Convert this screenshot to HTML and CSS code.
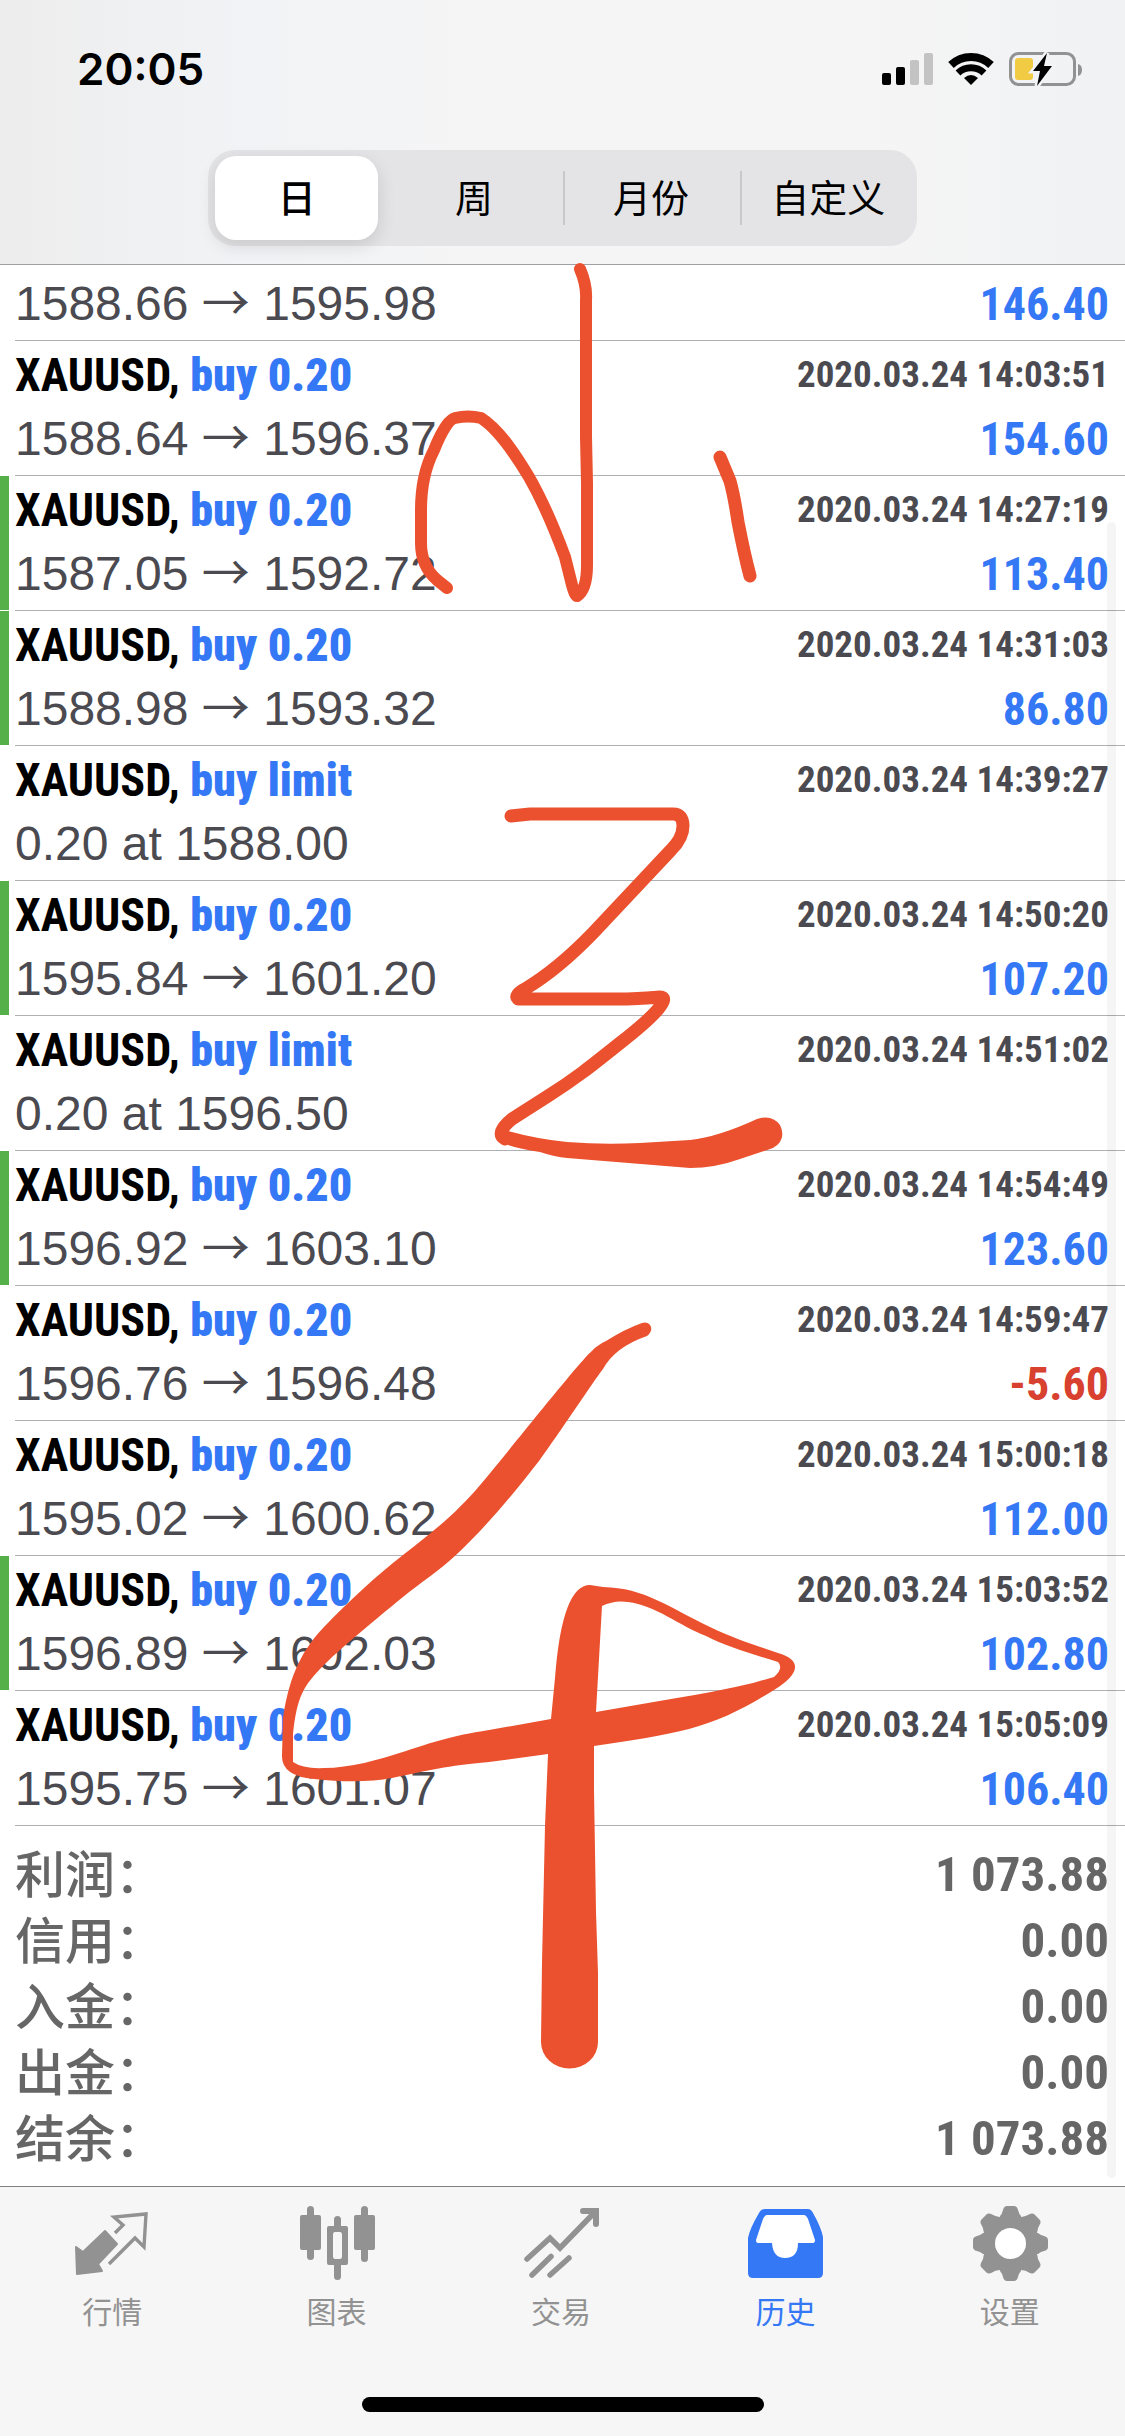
FILE: index.html
```
<!DOCTYPE html>
<html lang="zh-CN">
<head>
  <meta charset="UTF-8">
  <meta name="viewport" content="width=device-width, initial-scale=1.0">
  <title>历史</title>
  <link rel="stylesheet" href="styles.css">
</head>
<body>
  <header class="top">
    <div class="status">
      <time class="clock">20:05</time>
      <svg class="status-icons" viewBox="0 0 200 34" aria-hidden="true">
        <!-- signal -->
        <rect x="0" y="21" width="9" height="12" rx="2"/>
        <rect x="14" y="15" width="9" height="18" rx="2"/>
        <rect x="28" y="8" width="9" height="25" rx="2" fill="#c3c3c3"/>
        <rect x="42" y="1" width="9" height="32" rx="2" fill="#c3c3c3"/>
        <!-- wifi -->
        <path d="M69 13A29 29 0 0 1 109 13" fill="none" stroke="#000" stroke-width="8"/>
        <path d="M76 21A19 19 0 0 1 102 21" fill="none" stroke="#000" stroke-width="7"/>
        <path d="M89 33L82 26Q89 20 96 26Z"/>
        <!-- battery -->
        <rect x="128.5" y="1.5" width="64" height="31" rx="8" fill="none" stroke="#929292" stroke-width="3"/>
        <path d="M196 12Q200 13 200 18Q200 23 196 24Z" fill="#929292"/>
        <rect x="133" y="6" width="18" height="22" rx="3" fill="#f2cb45"/>
        <path class="bolt" d="M165 1L151 19H158L155 34L170 14H162Z"/>
      </svg>
    </div>
    <div class="segmented">
      <button type="button" class="segment active">日</button>
      <button type="button" class="segment">周</button>
      <button type="button" class="segment divided">月份</button>
      <button type="button" class="segment divided">自定义</button>
    </div>
  </header>

  <main class="history">
    <ul class="deals">
      <li class="deal">
        <div class="deal-body">
          <div class="line"><span class="symbol">XAUUSD, <b>buy 0.20</b></span></div>
          <div class="line"><span class="prices">1588.66 <i>→</i> 1595.98</span><span class="profit">146.40</span></div>
        </div>
      </li>
      <li class="deal">
        <div class="deal-body">
          <div class="line"><span class="symbol">XAUUSD, <b>buy 0.20</b></span><time>2020.03.24 14:03:51</time></div>
          <div class="line"><span class="prices">1588.64 <i>→</i> 1596.37</span><span class="profit">154.60</span></div>
        </div>
      </li>
      <li class="deal tp">
        <div class="deal-body">
          <div class="line"><span class="symbol">XAUUSD, <b>buy 0.20</b></span><time>2020.03.24 14:27:19</time></div>
          <div class="line"><span class="prices">1587.05 <i>→</i> 1592.72</span><span class="profit">113.40</span></div>
        </div>
      </li>
      <li class="deal tp">
        <div class="deal-body">
          <div class="line"><span class="symbol">XAUUSD, <b>buy 0.20</b></span><time>2020.03.24 14:31:03</time></div>
          <div class="line"><span class="prices">1588.98 <i>→</i> 1593.32</span><span class="profit">86.80</span></div>
        </div>
      </li>
      <li class="deal">
        <div class="deal-body">
          <div class="line"><span class="symbol">XAUUSD, <b>buy limit</b></span><time>2020.03.24 14:39:27</time></div>
          <div class="line"><span class="prices">0.20 at 1588.00</span></div>
        </div>
      </li>
      <li class="deal tp">
        <div class="deal-body">
          <div class="line"><span class="symbol">XAUUSD, <b>buy 0.20</b></span><time>2020.03.24 14:50:20</time></div>
          <div class="line"><span class="prices">1595.84 <i>→</i> 1601.20</span><span class="profit">107.20</span></div>
        </div>
      </li>
      <li class="deal">
        <div class="deal-body">
          <div class="line"><span class="symbol">XAUUSD, <b>buy limit</b></span><time>2020.03.24 14:51:02</time></div>
          <div class="line"><span class="prices">0.20 at 1596.50</span></div>
        </div>
      </li>
      <li class="deal tp">
        <div class="deal-body">
          <div class="line"><span class="symbol">XAUUSD, <b>buy 0.20</b></span><time>2020.03.24 14:54:49</time></div>
          <div class="line"><span class="prices">1596.92 <i>→</i> 1603.10</span><span class="profit">123.60</span></div>
        </div>
      </li>
      <li class="deal">
        <div class="deal-body">
          <div class="line"><span class="symbol">XAUUSD, <b>buy 0.20</b></span><time>2020.03.24 14:59:47</time></div>
          <div class="line"><span class="prices">1596.76 <i>→</i> 1596.48</span><span class="profit loss">-5.60</span></div>
        </div>
      </li>
      <li class="deal">
        <div class="deal-body">
          <div class="line"><span class="symbol">XAUUSD, <b>buy 0.20</b></span><time>2020.03.24 15:00:18</time></div>
          <div class="line"><span class="prices">1595.02 <i>→</i> 1600.62</span><span class="profit">112.00</span></div>
        </div>
      </li>
      <li class="deal tp">
        <div class="deal-body">
          <div class="line"><span class="symbol">XAUUSD, <b>buy 0.20</b></span><time>2020.03.24 15:03:52</time></div>
          <div class="line"><span class="prices">1596.89 <i>→</i> 1602.03</span><span class="profit">102.80</span></div>
        </div>
      </li>
      <li class="deal">
        <div class="deal-body">
          <div class="line"><span class="symbol">XAUUSD, <b>buy 0.20</b></span><time>2020.03.24 15:05:09</time></div>
          <div class="line"><span class="prices">1595.75 <i>→</i> 1601.07</span><span class="profit">106.40</span></div>
        </div>
      </li>
    </ul>
    <dl class="summary">
      <div><dt>利润：</dt><dd>1 073.88</dd></div>
      <div><dt>信用：</dt><dd>0.00</dd></div>
      <div><dt>入金：</dt><dd>0.00</dd></div>
      <div><dt>出金：</dt><dd>0.00</dd></div>
      <div><dt>结余：</dt><dd>1 073.88</dd></div>
    </dl>
    <div class="scroll-thumb"></div>
  </main>

  <footer class="bottom">
    <nav class="tabs">
      <a href="#quotes" class="tab">
        <svg viewBox="0 0 80 80" aria-hidden="true">
          <path d="M4 43L11 48L33 27L45 40L26 60L30 67L5 70Z" fill="currentColor" stroke="currentColor" stroke-width="2" stroke-linejoin="round"/>
          <path d="M43 29L51 21L42 13L74 10L72 43L63 34L37 60" fill="none" stroke="currentColor" stroke-width="3.4"/>
        </svg>
        <span>行情</span>
      </a>
      <a href="#charts" class="tab">
        <svg viewBox="0 0 80 80" fill="currentColor" aria-hidden="true">
          <rect x="3" y="11" width="21" height="35" rx="2"/>
          <rect x="10" y="2" width="7" height="54" rx="3.5"/>
          <path d="M32 22H49Q51 22 51 24V59Q51 61 49 61H32Q30 61 30 59V24Q30 22 32 22ZM38 28Q36 28 36 31V52Q36 55 38 55H43Q45 55 45 52V31Q45 28 43 28Z" fill-rule="evenodd"/>
          <path d="M37 23V15.500A3.500 3.500 0 0 1 44 15.500V23ZM37 60V72.500A3.500 3.500 0 0 0 44 72.500V60Z"/>
          <rect x="57" y="11" width="21" height="35" rx="2"/>
          <rect x="64" y="2" width="7" height="56" rx="3.500"/>
        </svg>
        <span>图表</span>
      </a>
      <a href="#trade" class="tab">
        <svg viewBox="0 0 80 80" fill="none" stroke="currentColor" stroke-width="6" stroke-linecap="round" aria-hidden="true">
          <path d="M6 55L29 34L39 44L73 9" stroke-width="5.500"/>
          <path d="M62 7H75V20"/>
          <path d="M11 71L30 52.500M29 71L48 54" stroke-width="5.500"/>
        </svg>
        <span>交易</span>
      </a>
      <a href="#history" class="tab active">
        <svg viewBox="0 0 80 80" aria-hidden="true">
          <path d="M20 5H63Q66 5 68 9Q76 23 78 33V69Q78 74 73 74H8Q3 74 3 69V34Q5 24 14 9Q16 5 20 5Z" fill="currentColor"/>
          <path d="M22 11H59Q61 11 63 15L70 36Q70 39 68 39H53Q53 54 40 54Q28 54 27 39H13Q11 39 11 36L18 15Q20 11 22 11Z" fill="#fff"/>
        </svg>
        <span>历史</span>
      </a>
      <a href="#settings" class="tab">
        <svg viewBox="0 0 80 80" aria-hidden="true">
          <defs>
            <path id="tooth" d="M30 12Q32 10 33 6Q34 2 37 2H44Q47 2 48 6Q49 10 51 12L54 24H27Z"/>
          </defs>
          <g fill="currentColor">
            <circle cx="40.500" cy="39.500" r="28.500"/>
            <use href="#tooth"/>
            <use href="#tooth" transform="rotate(45 40.5 39.5)"/>
            <use href="#tooth" transform="rotate(90 40.5 39.5)"/>
            <use href="#tooth" transform="rotate(135 40.5 39.5)"/>
            <use href="#tooth" transform="rotate(180 40.5 39.5)"/>
            <use href="#tooth" transform="rotate(225 40.5 39.5)"/>
            <use href="#tooth" transform="rotate(270 40.5 39.5)"/>
            <use href="#tooth" transform="rotate(315 40.5 39.5)"/>
          </g>
          <circle cx="40.500" cy="39.500" r="15.500" fill="#fff"/>
        </svg>
        <span>设置</span>
      </a>
    </nav>
    <div class="home-bar"></div>
  </footer>

  <!-- hand-drawn marks -->
  <svg class="marks" viewBox="0 0 1125 2436" aria-hidden="true">
    <g fill="none" stroke="#eb512e" stroke-linecap="round" stroke-linejoin="round">
      <path stroke-width="12" d="M447 588L437 580Q421 566 421 543V510Q421 475 434 450Q446 420 455 418Q468 415 481 418C500 430 517 457 529 477C545 505 555 530 565 557L572 585Q575 596 577 596Q587 590 587 565V483L586 437V300Q587 285 580 269"/>
      <path stroke-width="13" d="M720 457L730 481Q734 495 738 522Q744 553 750 576"/>
      <path stroke-width="13" d="M511 816L530 814H673Q683 814 683 826Q683 838 671 850L640 883L593 933C565 962 545 977 525 989Q514 995 518 999H627Q650 998 660 997C670 997 660 1012 620 1043C590 1067 575 1079 548 1096L512 1119Q495 1133 505 1139"/>
    </g>
    <g fill="#eb512e" fill-rule="evenodd">
      <path d="M508 1131Q537 1139 567 1142Q603 1145 640 1143L690 1140Q718 1137 757 1119Q772 1114 780 1125Q787 1140 773 1148L740 1159Q715 1168 690 1168L567 1158Q555 1157 540 1152Q520 1149 508 1145Z"/>
      <path d="M642 1323C649 1320 656 1329 647 1336Q615 1347 603 1369C593 1382 560 1432 539 1461C515 1492 485 1528 456 1555C440 1570 420 1583 403 1597S345 1644 324 1665S297 1697 293 1734V1762Q303 1769 324 1768C350 1768 378 1760 406 1751S450 1736 489 1730L551 1719L555 1678Q562 1585 590 1585L603 1587C645 1588 668 1607 710 1627C735 1639 755 1645 778 1653Q795 1658 795 1667Q795 1677 774 1690C745 1708 720 1721 689 1729C665 1735 630 1741 594 1746V1790L596 1912L598 1973V2042A28 26 0 0 1 541 2042L542 1963L545 1826L548 1754L489 1762C446 1766 430 1770 392 1778Q360 1784 314 1779Q281 1776 282 1755L283 1718C288 1685 297 1655 324 1627C350 1600 375 1577 403 1555S455 1515 481 1484S545 1405 567 1379S595 1346 606 1341Q625 1329 642 1323ZM602 1606Q614 1600 628 1602C655 1605 680 1626 706 1636C725 1646 755 1655 778 1662Q784 1668 774 1677L753 1683Q715 1692 671 1699L596 1712Z"/>
    </g>
  </svg>
</body>
</html>
```
FILE: styles.css
```
* {
  box-sizing: border-box;
}
body {
  margin: 0;
  min-height: 100vh;
  display: flex;
  flex-direction: column;
  position: relative;
  background: #fff;
  font-family: 'Liberation Sans', 'Noto Sans CJK SC', sans-serif;
  color: #4a4a50;
}
ul, dl, dd {
  margin: 0;
  padding: 0;
}

/* Status bar + period switch */
.top {
  padding-bottom: 18px;
  background: linear-gradient(to right, #ededed, #f2f3f6 22%, #f5f5f5 45%, #f5f5f5 75%, #f1f2f4);
  border-bottom: 1px solid #a0a0a4;
}
.status {
  display: flex;
  justify-content: space-between;
  align-items: center;
  height: 138px;
  padding: 0 43px 0 77px;
}
.clock {
  font-family: Inter, sans-serif;
  font-size: 44px;
  font-weight: 600;
  color: #000;
}
.status-icons {
  width: 200px;
  height: 34px;
}
.bolt {
  stroke: #f3f4f5;
  stroke-width: 5px;
  paint-order: stroke;
}
.segmented {
  display: grid;
  grid-template-columns: repeat(4, 1fr);
  width: 63%;
  height: 96px;
  margin: 12px auto 0;
  padding: 6px 0;
  background: #e4e4e6;
  border-radius: 27px;
}
.segment {
  padding: 0 0 4px;
  border: none;
  background: none;
  font-family: 'Noto Sans CJK SC', sans-serif;
  font-size: 38px;
  line-height: 44px;
  color: #000;
  white-space: nowrap;
  cursor: pointer;
}
.segment.active {
  margin: 0 7px 0 7px;
  border-radius: 21px;
  background: #fff;
  font-weight: 500;
  box-shadow: 0 6px 18px rgba(0, 0, 0, 0.12);
}
.segment.divided {
  background: linear-gradient(#c8c8cb, #c8c8cb) left center / 2px 54px no-repeat;
}

/* Deals */
.history {
  flex: 1;
  position: relative;
  overflow: hidden;
}
.deals {
  margin-top: -59px;
  list-style: none;
}
.deal {
  display: flex;
  height: 135px;
}
.deal::before {
  content: "";
  width: 9px;
  margin-bottom: 1px;
}
.deal.tp::before {
  background: #55b04a;
}
.deal-body {
  flex: 1;
  margin-left: 6px;
  padding: 2px 16px 0 0;
  border-bottom: 1px solid #b0b0b4;
}
.line {
  display: flex;
  justify-content: space-between;
  line-height: 64px;
  white-space: nowrap;
}
.symbol,
.line time,
.profit,
.summary dd {
  font-family: 'Roboto Condensed', 'Liberation Sans', sans-serif;
  font-weight: bold;
}
.symbol {
  font-size: 46px;
  color: #000;
}
.symbol b {
  color: #3478f6;
}
.line time {
  font-size: 37px;
}
.prices {
  font-size: 48px;
}
.prices i {
  font-family: 'Noto Sans CJK SC', sans-serif;
  font-style: normal;
  line-height: 1;
}
.profit {
  font-size: 46px;
  color: #3478f6;
}
.profit.loss {
  color: #d8402f;
}

/* Totals */
.summary {
  padding: 16px 16px 14px 15px;
  color: #666;
}
.summary div {
  display: flex;
  justify-content: space-between;
  height: 66px;
}
.summary dt {
  font-family: 'Noto Sans CJK SC', sans-serif;
  font-size: 50px;
  font-weight: 500;
  line-height: 58px;
}
.summary dd {
  font-size: 49px;
  line-height: 66px;
}
.scroll-thumb {
  position: absolute;
  top: 257px;
  right: 9px;
  bottom: 8px;
  width: 9px;
  border-radius: 5px;
  background: rgba(0, 0, 0, 0.04);
}

/* Tab bar */
.bottom {
  padding-bottom: 24px;
  background: #f6f6f6;
  border-top: 1px solid #808084;
}
.tabs {
  display: flex;
  padding: 17px 3px 0 0;
}
.tab {
  flex: 1;
  display: flex;
  flex-direction: column;
  align-items: center;
  gap: 4px;
  font-family: 'Noto Sans CJK SC', sans-serif;
  font-size: 30px;
  line-height: 44px;
  color: #929292;
  text-decoration: none;
}
.tab svg {
  width: 80px;
  height: 80px;
}
.tab.active {
  color: #3478f6;
}
.home-bar {
  width: 402px;
  height: 15px;
  margin: 65px auto 0;
  border-radius: 8px;
  background: #000;
}

.marks {
  position: absolute;
  top: 0;
  left: 0;
  width: 100%;
  pointer-events: none;
}
```
